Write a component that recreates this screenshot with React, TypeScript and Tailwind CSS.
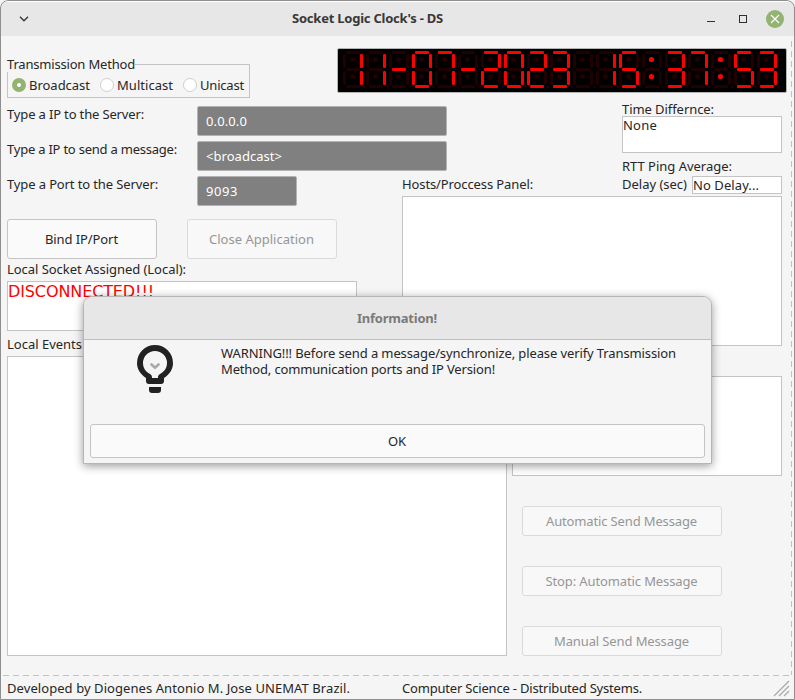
import { useLayoutEffect, useRef } from "react";

/** Single-line text whose tracking is adjusted so that it spans `w` pixels. */
function Text({ w, children, className = "" }: { w: number; children: string; className?: string }) {
  const ref = useRef<HTMLSpanElement>(null);
  useLayoutEffect(() => {
    const el = ref.current;
    if (!el) return;
    el.style.letterSpacing = "0px";
    const natural = el.getBoundingClientRect().width;
    el.style.letterSpacing = `${(w - natural) / children.length}px`;
  }, [w, children]);
  return (
    <span ref={ref} className={`block w-max shrink-0 whitespace-pre leading-4 ${className}`}>
      {children}
    </span>
  );
}

// Segment order: top, upper left, upper right, middle, lower left, lower right, bottom
const SEGMENTS: Record<string, string> = {
  "0": "1110111",
  "1": "0010010",
  "2": "1011101",
  "3": "1011011",
  "5": "1101011",
  "7": "1010010",
  "-": "0001000",
  " ": "0000000",
  ":": "0000000",
};

const SHAPES = [
  [3, 0, 14, 3],
  [0, 3, 3, 14],
  [17, 3, 3, 14],
  [3, 17, 14, 3],
  [0, 20, 3, 14],
  [17, 20, 3, 14],
  [3, 34, 14, 3],
];

function Lcd({ value }: { value: string }) {
  return (
    <svg width="448" height="43" viewBox="338 49 448 43">
      {value.split("").map((ch, i) => (
        <g key={i} transform={`translate(${343 + i * 23} 51)`}>
          {SHAPES.map(([x, y, w, h], s) => (
            <rect key={s} x={x} y={y} width={w} height={h} rx="1" fill={SEGMENTS[ch][s] === "1" ? "#ff0000" : "#200000"} />
          ))}
          <circle cx="9.5" cy="8.5" r="2.6" fill={ch === ":" ? "#ff0000" : "#200000"} />
          <circle cx="9.5" cy="25.5" r="2.6" fill={ch === ":" ? "#ff0000" : "#200000"} />
          <circle cx="21.5" cy="35.5" r="1.5" fill="#200000" />
        </g>
      ))}
    </svg>
  );
}

function Radio({ checked = false }: { checked?: boolean }) {
  return checked ? (
    <span className="flex size-[14px] items-center justify-center rounded-full bg-[#92b372]">
      <span className="size-1 rounded-full bg-white" />
    </span>
  ) : (
    <span className="size-[14px] rounded-full border border-[#cfcfcf] bg-white" />
  );
}

function Field({ children, w, className }: { children: string; w: number; className: string }) {
  return (
    <div className={`flex h-[30px] shrink-0 items-center rounded-[2px] border border-[#b4b4b4] bg-[#808080] pl-2 text-white ${className}`}>
      <Text w={w}>{children}</Text>
    </div>
  );
}

function Button({ children, w, disabled, className }: { children: string; w: number; disabled?: boolean; className: string }) {
  return (
    <button
      disabled={disabled}
      className={`flex items-center justify-center rounded-[3px] border pr-px ${
        disabled ? "border-[#dadada] bg-[#f8f8f8] text-[#969696]" : "border-[#c4c4c4] bg-[#fafafa] text-[#262626]"
      } ${className}`}
    >
      <Text w={w}>{children}</Text>
    </button>
  );
}

function TitleBar() {
  return (
    <header className="flex h-[35px] shrink-0 items-center border-t border-white bg-[#e7e7e7] pr-[11px] pl-[19px]">
      <svg className="-mt-px" width="10" height="6" viewBox="0 0 10 6" fill="none" stroke="#383838" strokeWidth="1.4">
        <path d="M1 .8 5 4.8 9 .8" />
      </svg>
      <Text w={151} className="mb-[2px] ml-[263px] font-bold text-[#383838]">{"Socket Logic Clock's - DS"}</Text>
      <svg className="-mt-px ml-auto" width="78" height="18" viewBox="0 0 78 18" fill="none">
        <path d="M1 11.5h8" stroke="#303030" />
        <rect x="33.5" y="5.5" width="7" height="7" stroke="#303030" />
        <circle cx="69" cy="9" r="9" fill="#92b372" />
        <path d="m65 5 8 8m0-8-8 8" stroke="#fff" strokeWidth="1.2" />
      </svg>
    </header>
  );
}

function Dialog() {
  return (
    <section className="absolute top-[296px] left-[83px] flex h-[168px] w-[629px] flex-col overflow-hidden rounded-t-[9px] border border-[#b5b5b5] bg-[#f5f5f5] shadow-[0_2px_10px_rgba(0,0,0,0.4)]">
      <h2 className="flex h-[43px] shrink-0 items-center justify-center border-b border-[#bdbdbd] bg-[#e7e7e7] pr-px font-bold text-[#7a7a7a]">
        <Text w={80}>Information!</Text>
      </h2>
      <div className="flex grow pt-[5px] pl-[53px]">
        <svg width="36" height="48" viewBox="0 0 36 48" fill="none">
          <path d="M18 0a18 18 0 0 1 18 18c0 6-3 11-9 15V36a3 3 0 0 1-3 3h-12a3 3 0 0 1-3-3v-3C3 29 0 24 0 18A18 18 0 0 1 18 0z" fill="#222" />
          <path d="M18 6a12 12 0 0 1 12 12c0 5-2.500 8.500-7 11-1.500.9-2 1.500-2 4h-6c0-2.500-.5-3.100-2-4C8.500 26.500 6 23 6 18A12 12 0 0 1 18 6z" fill="#f5f5f5" />
          <path d="m14.500 19.500 3.500 3.200 3.500-3.200" stroke="#aaa" strokeWidth="2.800" strokeLinecap="round" />
          <path d="M12 42h12v3q0 3-3 3h-6q-3 0-3-3z" fill="#222" />
        </svg>
        <div className="ml-[48px] flex flex-col">
          <Text w={455}>WARNING!!! Before send a message/synchronize, please verify Transmission</Text>
          <Text w={274}>Method, communication ports and IP Version!</Text>
        </div>
      </div>
      <div className="px-1.5 pb-[5px]">
        <Button w={18} className="h-[34px] w-full">OK</Button>
      </div>
    </section>
  );
}

function Dashes({ vertical }: { vertical?: boolean }) {
  return vertical ? (
    <svg className="shrink-0" width="1" height="639" viewBox="0 0 1 639">
      <path d="M.5 5V639" stroke="#c2c2c2" strokeDasharray="6 4" />
    </svg>
  ) : (
    <svg className="block" width="791" height="1" viewBox="0 0 791 1">
      <path d="M3 .5H791" stroke="#c2c2c2" strokeDasharray="6 4" />
    </svg>
  );
}

export default function App() {
  return (
    <div className="h-[700px] w-[795px] overflow-hidden bg-[#f5f5f5]">
      <main className="relative flex h-[700px] w-[795px] flex-col overflow-hidden rounded-t-[8px] bg-[#f5f5f5] font-['Noto_Sans','Open_Sans',sans-serif] text-[13px] text-[#262626]">
        <div className="pt-px">
          <TitleBar />
        </div>

        <div className="flex h-[639px] justify-between pr-[3px] pl-[7px]">
          <div className="w-[779px]">
            <div className="flex h-[66px] justify-between">
              <div className="mt-5 flex h-[42px] w-[243px] flex-col">
                <div className="flex h-4">
                  <Text w={128}>Transmission Method</Text>
                  <span className="mt-2 h-2 grow border-t border-r border-[#c4c4c4]" />
                </div>
                <div className="flex grow items-center border-x border-b border-[#c4c4c4] pl-1">
                  <Radio checked />
                  <Text w={61} className="ml-[3px]">Broadcast</Text>
                  <span className="w-[10px]" />
                  <Radio />
                  <Text w={56} className="ml-[3px]">Multicast</Text>
                  <span className="w-[10px]" />
                  <Radio />
                  <Text w={44} className="ml-[3px]">Unicast</Text>
                </div>
              </div>
              <div className="mt-3 -mr-px h-[45px] w-[450px] rounded-[2px] border border-[#b4b4b4] bg-black">
                <Lcd value="11-07-2023 15:37:53" />
              </div>
            </div>

            <div className="flex h-[254px]">
              <div className="w-[395px]">
                <div className="flex h-[35px] pt-1">
                  <Text w={137} className="mr-[53px]">Type a IP to the Server:</Text>
                  <Field w={41} className="w-[250px]">0.0.0.0</Field>
                </div>
                <div className="flex h-[35px] pt-1">
                  <Text w={170} className="mr-[20px]">Type a IP to send a message:</Text>
                  <Field w={76} className="w-[250px]">{"<broadcast>"}</Field>
                </div>
                <div className="flex h-[35px] pt-1">
                  <Text w={151} className="mr-[39px]">Type a Port to the Server:</Text>
                  <Field w={32} className="w-[100px]">9093</Field>
                </div>
                <div className="mt-3 flex gap-[30px]">
                  <Button w={73} className="h-10 w-[150px]">Bind IP/Port</Button>
                  <Button w={105} disabled className="h-10 w-[150px]">Close Application</Button>
                </div>
                <div className="mt-[2px] flex h-[20px]">
                  <Text w={179}>Local Socket Assigned (Local):</Text>
                </div>
                <div className="flex h-[50px] w-[350px] border border-[#c4c4c4] bg-white">
                  <Text w={146} className="mt-[2px] font-['DejaVu_Sans',sans-serif] text-[16px] text-[#ff0000]">DISCONNECTED!!!</Text>
                </div>
                <div className="mt-[5px] flex">
                  <Text w={75}>Local Events</Text>
                </div>
              </div>
              <div className="w-[380px]">
                <div className="flex h-[92px] items-end justify-between">
                  <Text w={131} className="mb-[2px]">Hosts/Proccess Panel:</Text>
                  <div className="flex w-[160px] flex-col">
                    <Text w={92}>Time Differnce:</Text>
                    <div className="-mt-px flex h-[37px] border border-[#c4c4c4] bg-white">
                      <Text w={34}>None</Text>
                    </div>
                    <Text w={110} className="mt-[5px]">RTT Ping Average:</Text>
                    <div className="mt-[2px] flex h-[18px] justify-between">
                      <Text w={65}>Delay (sec)</Text>
                      <div className="flex w-[90px] items-center border border-[#c4c4c4] bg-white">
                        <Text w={66}>No Delay...</Text>
                      </div>
                    </div>
                  </div>
                </div>
                <div className="mt-[2px] h-[150px] border border-[#c4c4c4] bg-white" />
              </div>
            </div>

            <div className="flex gap-[5px]">
              <div className="h-[300px] w-[500px] border border-[#c4c4c4] bg-white" />
              <div className="w-[270px] pt-5">
                <div className="h-[100px] border border-[#c4c4c4] bg-white" />
                <div className="mt-[30px] ml-[10px] flex flex-col gap-[30px]">
                  <Button w={151} disabled className="h-[30px] w-[200px]">Automatic Send Message</Button>
                  <Button w={152} disabled className="h-[30px] w-[200px]">Stop: Automatic Message</Button>
                  <Button w={135} disabled className="h-[30px] w-[200px]">Manual Send Message</Button>
                </div>
              </div>
            </div>
          </div>
          <Dashes vertical />
        </div>

        <footer className="h-[25px]">
          <Dashes />
          <div className="flex pt-1 pl-[7px]">
            <Text w={343} className="mr-[52px]">Developed by Diogenes Antonio M. Jose UNEMAT Brazil.</Text>
            <Text w={240}>Computer Science - Distributed Systems.</Text>
            <svg className="ml-auto mr-[5px]" width="17" height="17" viewBox="0 0 17 17" stroke="#aaa" strokeWidth="1.3">
              <path d="M1 16 16 1M6 16 16 6M11 16l5-5" />
            </svg>
          </div>
        </footer>

        <Dialog />
        <div className="pointer-events-none absolute inset-0 rounded-t-[8px] border border-[#8e8e8e]" />
      </main>
    </div>
  );
}
